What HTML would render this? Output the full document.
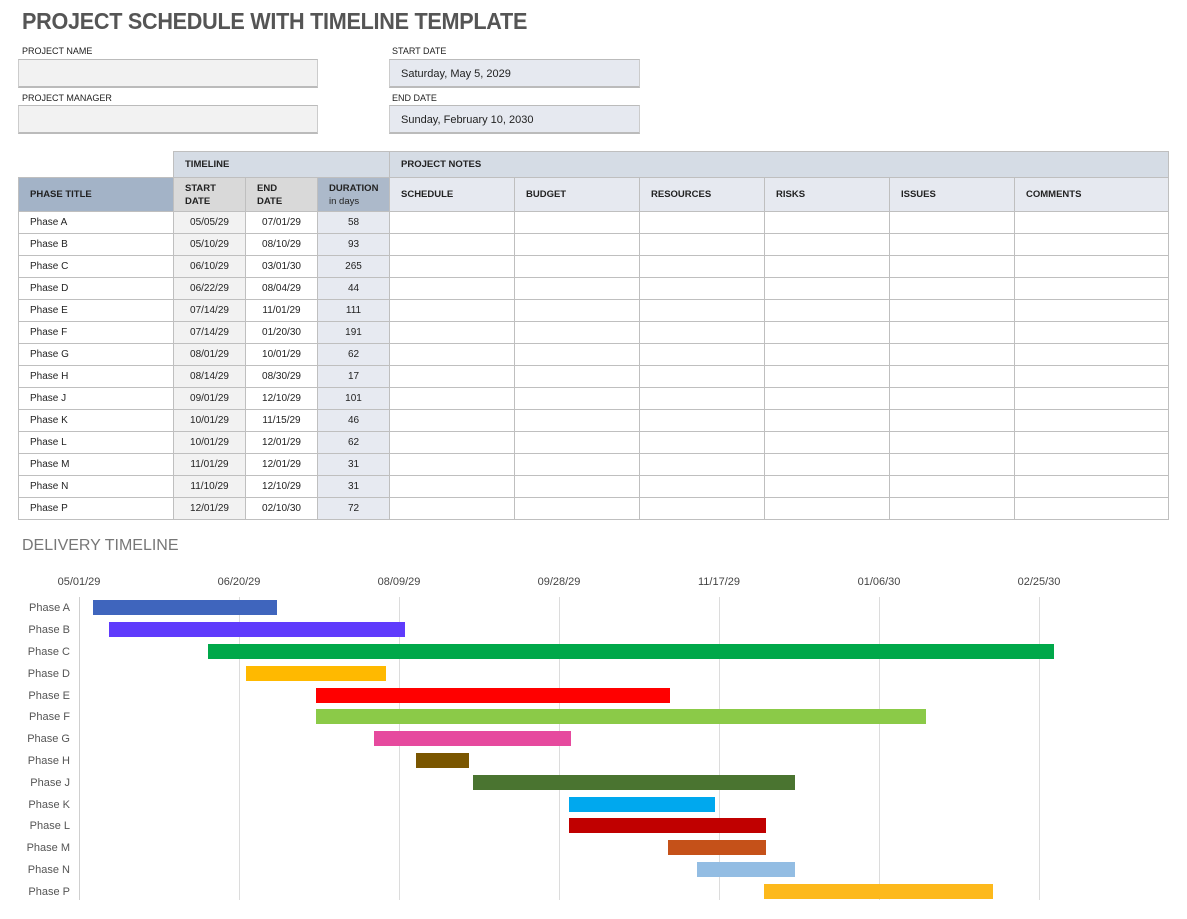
<!DOCTYPE html>
<html><head><meta charset="utf-8"><style>
body{margin:0;width:1187px;height:919px;background:#fff;font-family:"Liberation Sans",sans-serif;color:#333;position:relative;overflow:hidden}
.a{position:absolute}
h1{position:absolute;left:22px;top:8px;margin:0;font-size:23px;font-weight:bold;color:#555;letter-spacing:-0.3px;transform:scaleX(0.94);transform-origin:left;white-space:nowrap}
.lbl{position:absolute;font-size:9px;color:#222}
.box{position:absolute;height:29px;border-bottom:2px solid #bbb;border-top:1px solid #bbb;border-left:1px solid #ccc;border-right:1px solid #ccc;box-sizing:border-box;font-size:11px;line-height:28px;padding-left:11px;color:#222}
table{position:absolute;left:18px;top:151px;border-collapse:collapse;table-layout:fixed;width:1150px}
td{border:1px solid #bfbfbf;font-size:10px;padding:0 0 0 11px;color:#222;height:21px;overflow:hidden;white-space:nowrap}
.h td{font-weight:bold;font-size:9.5px}
.h1 td{background:#d5dce5;height:25px}
.h2 td{background:#e6e9f0;height:33px;line-height:13px}
td.c{text-align:center;padding:0}
.sd{background:#f2f2f2}
.du{background:#e7eaf1}
.gl{position:absolute;top:597px;height:303px;width:1px;background:#dcdcdc}
.tick{position:absolute;top:576px;font-size:11px;color:#444;width:80px;text-align:center}
.pl{position:absolute;left:0;width:70px;text-align:right;font-size:11px;color:#555}
.bar{position:absolute;height:15px}
</style></head><body>
<h1>PROJECT SCHEDULE WITH TIMELINE TEMPLATE</h1>
<div class="lbl" style="left:22px;top:46px">PROJECT NAME</div>
<div class="box" style="left:18px;top:59px;width:300px;background:#f2f2f2"></div>
<div class="lbl" style="left:22px;top:93px">PROJECT MANAGER</div>
<div class="box" style="left:18px;top:105px;width:300px;background:#f2f2f2"></div>
<div class="lbl" style="left:392px;top:46px">START DATE</div>
<div class="box" style="left:389px;top:59px;width:251px;background:#e6e9f0">Saturday, May 5, 2029</div>
<div class="lbl" style="left:392px;top:93px">END DATE</div>
<div class="box" style="left:389px;top:105px;width:251px;background:#e6e9f0">Sunday, February 10, 2030</div>

<table>
<colgroup><col style="width:155px"><col style="width:72px"><col style="width:72px"><col style="width:72px"><col style="width:125px"><col style="width:125px"><col style="width:125px"><col style="width:125px"><col style="width:125px"><col style="width:154px"></colgroup>
<tr class="h h1"><td style="border:none;background:#fff;border-bottom:1px solid #bfbfbf"></td><td colspan="3">TIMELINE</td><td colspan="6">PROJECT NOTES</td></tr>
<tr class="h h2"><td style="background:#a3b3c7">PHASE TITLE</td><td style="background:#d9d9d9">START<br>DATE</td><td style="background:#d9d9d9">END<br>DATE</td><td style="background:#acb9ca">DURATION<br><span style="font-weight:normal">in days</span></td><td>SCHEDULE</td><td>BUDGET</td><td>RESOURCES</td><td>RISKS</td><td>ISSUES</td><td>COMMENTS</td></tr>
<tr><td>Phase A</td><td class="c sd">05/05/29</td><td class="c">07/01/29</td><td class="c du">58</td><td></td><td></td><td></td><td></td><td></td><td></td></tr>
<tr><td>Phase B</td><td class="c sd">05/10/29</td><td class="c">08/10/29</td><td class="c du">93</td><td></td><td></td><td></td><td></td><td></td><td></td></tr>
<tr><td>Phase C</td><td class="c sd">06/10/29</td><td class="c">03/01/30</td><td class="c du">265</td><td></td><td></td><td></td><td></td><td></td><td></td></tr>
<tr><td>Phase D</td><td class="c sd">06/22/29</td><td class="c">08/04/29</td><td class="c du">44</td><td></td><td></td><td></td><td></td><td></td><td></td></tr>
<tr><td>Phase E</td><td class="c sd">07/14/29</td><td class="c">11/01/29</td><td class="c du">111</td><td></td><td></td><td></td><td></td><td></td><td></td></tr>
<tr><td>Phase F</td><td class="c sd">07/14/29</td><td class="c">01/20/30</td><td class="c du">191</td><td></td><td></td><td></td><td></td><td></td><td></td></tr>
<tr><td>Phase G</td><td class="c sd">08/01/29</td><td class="c">10/01/29</td><td class="c du">62</td><td></td><td></td><td></td><td></td><td></td><td></td></tr>
<tr><td>Phase H</td><td class="c sd">08/14/29</td><td class="c">08/30/29</td><td class="c du">17</td><td></td><td></td><td></td><td></td><td></td><td></td></tr>
<tr><td>Phase J</td><td class="c sd">09/01/29</td><td class="c">12/10/29</td><td class="c du">101</td><td></td><td></td><td></td><td></td><td></td><td></td></tr>
<tr><td>Phase K</td><td class="c sd">10/01/29</td><td class="c">11/15/29</td><td class="c du">46</td><td></td><td></td><td></td><td></td><td></td><td></td></tr>
<tr><td>Phase L</td><td class="c sd">10/01/29</td><td class="c">12/01/29</td><td class="c du">62</td><td></td><td></td><td></td><td></td><td></td><td></td></tr>
<tr><td>Phase M</td><td class="c sd">11/01/29</td><td class="c">12/01/29</td><td class="c du">31</td><td></td><td></td><td></td><td></td><td></td><td></td></tr>
<tr><td>Phase N</td><td class="c sd">11/10/29</td><td class="c">12/10/29</td><td class="c du">31</td><td></td><td></td><td></td><td></td><td></td><td></td></tr>
<tr><td>Phase P</td><td class="c sd">12/01/29</td><td class="c">02/10/30</td><td class="c du">72</td><td></td><td></td><td></td><td></td><td></td><td></td></tr>
</table>

<div class="a" style="left:22px;top:537px;font-size:16px;color:#777">DELIVERY TIMELINE</div>
<div class="gl" style="left:79px;background:#cfcfcf"></div>
<div class="gl" style="left:239px"></div>
<div class="gl" style="left:399px"></div>
<div class="gl" style="left:559px"></div>
<div class="gl" style="left:719px"></div>
<div class="gl" style="left:879px"></div>
<div class="gl" style="left:1039px"></div>
<div class="tick" style="left:39px">05/01/29</div>
<div class="tick" style="left:199px">06/20/29</div>
<div class="tick" style="left:359px">08/09/29</div>
<div class="tick" style="left:519px">09/28/29</div>
<div class="tick" style="left:679px">11/17/29</div>
<div class="tick" style="left:839px">01/06/30</div>
<div class="tick" style="left:999px">02/25/30</div>

<div class="pl" style="top:602px">Phase A</div>
<div class="pl" style="top:624px">Phase B</div>
<div class="pl" style="top:646px">Phase C</div>
<div class="pl" style="top:668px">Phase D</div>
<div class="pl" style="top:690px">Phase E</div>
<div class="pl" style="top:711px">Phase F</div>
<div class="pl" style="top:733px">Phase G</div>
<div class="pl" style="top:755px">Phase H</div>
<div class="pl" style="top:777px">Phase J</div>
<div class="pl" style="top:799px">Phase K</div>
<div class="pl" style="top:820px">Phase L</div>
<div class="pl" style="top:842px">Phase M</div>
<div class="pl" style="top:864px">Phase N</div>
<div class="pl" style="top:886px">Phase P</div>

<div class="bar" style="left:93px;width:184px;top:600px;background:#3f65bd"></div>
<div class="bar" style="left:109px;width:296px;top:622px;background:#5f3bfc"></div>
<div class="bar" style="left:208px;width:846px;top:644px;background:#00a84a"></div>
<div class="bar" style="left:246px;width:140px;top:666px;background:#ffb900"></div>
<div class="bar" style="left:316px;width:354px;top:688px;background:#ff0000"></div>
<div class="bar" style="left:316px;width:610px;top:709px;background:#8bca48"></div>
<div class="bar" style="left:374px;width:197px;top:731px;background:#e64a9e"></div>
<div class="bar" style="left:416px;width:53px;top:753px;background:#7a5600"></div>
<div class="bar" style="left:473px;width:322px;top:775px;background:#4a7430"></div>
<div class="bar" style="left:569px;width:146px;top:797px;background:#00a8ee"></div>
<div class="bar" style="left:569px;width:197px;top:818px;background:#c00000"></div>
<div class="bar" style="left:668px;width:98px;top:840px;background:#c55119"></div>
<div class="bar" style="left:697px;width:98px;top:862px;background:#93bde3"></div>
<div class="bar" style="left:764px;width:229px;top:884px;background:#fdb91c"></div>
</body></html>
